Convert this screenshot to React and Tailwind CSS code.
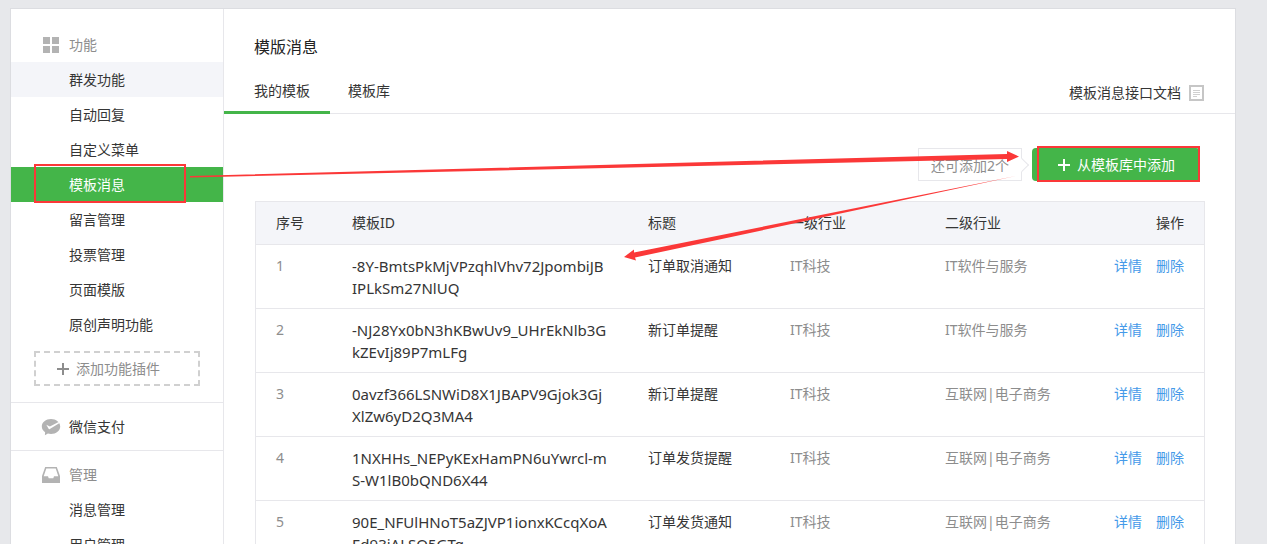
import { Fragment } from 'react';

const featureItems = [
  { label: '群发功能', state: 'hover' },
  { label: '自动回复' },
  { label: '自定义菜单' },
  { label: '模板消息', state: 'active' },
  { label: '留言管理' },
  { label: '投票管理' },
  { label: '页面模版' },
  { label: '原创声明功能' },
];

const manageItems = [{ label: '消息管理' }, { label: '用户管理' }];

const templates = [
  { id: ['-8Y-BmtsPkMjVPzqhlVhv72JpombiJB', 'IPLkSm27NlUQ'], title: '订单取消通知', primary: 'IT科技', secondary: 'IT软件与服务' },
  { id: ['-NJ28Yx0bN3hKBwUv9_UHrEkNlb3G', 'kZEvIj89P7mLFg'], title: '新订单提醒', primary: 'IT科技', secondary: 'IT软件与服务' },
  { id: ['0avzf366LSNWiD8X1JBAPV9Gjok3Gj', 'XlZw6yD2Q3MA4'], title: '新订单提醒', primary: 'IT科技', secondary: '互联网|电子商务' },
  { id: ['1NXHHs_NEPyKExHamPN6uYwrcl-m', 'S-W1lB0bQND6X44'], title: '订单发货提醒', primary: 'IT科技', secondary: '互联网|电子商务' },
  { id: ['90E_NFUlHNoT5aZJVP1ionxKCcqXoA', 'Ed93jALSQ5GTg'], title: '订单发货通知', primary: 'IT科技', secondary: '互联网|电子商务' },
];

function GridIcon() {
  return (
    <svg viewBox="0 0 18 18" className="h-[18px] w-[18px]" fill="#b3b3b3">
      <path d="M1 1h7v7H1zM10 1h7v7h-7zM1 10h7v7H1zM10 10h7v7h-7z" />
    </svg>
  );
}

function PayIcon() {
  return (
    <svg viewBox="0 0 20 18" className="h-[18px] w-5">
      <path d="M10 1C4.900 1 .8 4.300.8 8.500c0 2.300 1.300 4.300 3.300 5.700L3.900 17.200l3-1.600c1 .3 2 .4 3.100.4 5.100 0 9.200-3.300 9.200-7.500S15.100 1 10 1z" fill="#b3b3b3" />
      <path d="M5.300 6.800l2.300 4c.3.500.7.600 1.200.3L18.600 5 17.600 3.900 8.900 8.500z" fill="#fff" />
    </svg>
  );
}

function TrayIcon() {
  return (
    <svg viewBox="0 0 20 18" className="h-[18px] w-5">
      <path d="M4.200 1h11.600L19 10v7H1v-7z" fill="#b3b3b3" />
      <path d="M5.300 2.500h9.400l2.600 7.800H13l-.7 2H7.700L7 10.300H2.700z" fill="#fff" />
    </svg>
  );
}

function DocIcon() {
  return (
    <svg viewBox="0 0 15 16" className="h-4 w-[15px]">
      <path d="M1 1h13v14H1z" fill="#fff" stroke="#c6c6c6" strokeWidth="2" />
      <path d="M4 5.500h7M4 7.500h7M4 9.500h7M4 11.500h4" stroke="#d0d0d0" fill="none" />
    </svg>
  );
}

function PlusIcon() {
  return (
    <svg viewBox="0 0 14 14" className="h-3.5 w-3.5" fill="none" stroke="currentColor" strokeWidth="2">
      <path d="M7 1v12M1 7h12" />
    </svg>
  );
}

function NavItem({ label, state }) {
  const tone = state === 'active' ? 'bg-[#44b549] text-white' : state === 'hover' ? 'bg-[#f4f5f9]' : '';
  return (
    <li className="relative">
      <a href="#" aria-current={state === 'active' ? 'page' : undefined} className={`block h-[35px] pl-[58px] leading-[35px] ${tone}`}>
        {label}
      </a>
      {state === 'active' && <span className="absolute -top-[3px] left-[23px] h-[39px] w-[152px] border-2 border-[#fb3838]" />}
    </li>
  );
}

function Sidebar() {
  return (
    <nav className="w-[213px] shrink-0 border-r border-[#e7e7eb]">
      <div className="border-b border-[#e7e7eb] pt-[18px] pb-4">
        <h2 className="flex h-[35px] items-center gap-[9px] pl-[31px] text-[#8d8d8d]">
          <GridIcon />
          功能
        </h2>
        <ul>
          {featureItems.map((item) => <NavItem key={item.label} {...item} />)}
        </ul>
        <button type="button" className="mt-[9px] ml-[23px] flex h-[35px] w-[166px] items-center gap-1.5 border-2 border-dashed border-[#d0d0d0] pl-5 text-[#8d8d8d]">
          <PlusIcon />
          添加功能插件
        </button>
      </div>
      <a href="#" className="flex h-12 items-center gap-2 border-b border-[#e7e7eb] pl-[30px]">
        <PayIcon />
        微信支付
      </a>
      <div className="pt-1.5">
        <h2 className="flex h-[35px] items-center gap-2 pl-[30px] text-[#8d8d8d]">
          <TrayIcon />
          管理
        </h2>
        <ul>
          {manageItems.map((item) => <NavItem key={item.label} {...item} />)}
        </ul>
      </div>
    </nav>
  );
}

function TemplateTable() {
  return (
    <table className="mt-5 w-full table-fixed border-separate border-spacing-0 border border-[#e7e7eb] text-left">
      <thead className="bg-[#f4f5f9]">
        <tr className="h-[43px] *:border-b *:border-[#e7e7eb] *:px-5 *:font-normal">
          <th className="w-[76px]">序号</th>
          <th className="w-[296px]">模板ID</th>
          <th className="w-[142px]">标题</th>
          <th className="w-[155px]">一级行业</th>
          <th>二级行业</th>
          <th className="w-[130px] text-right">操作</th>
        </tr>
      </thead>
      <tbody>
        {templates.map((row, idx) => (
          <tr key={row.id[0]} className="align-top leading-[22px] *:border-b *:border-[#e7e7eb] *:px-5 *:pt-2.5 *:pb-[9px]">
            <td className="text-[#8d8d8d]">{idx + 1}</td>
            <td className="text-[15px] leading-[22px] whitespace-nowrap">
              {row.id.map((line, i) => (
                <Fragment key={line}>
                  {i > 0 && <br />}
                  {line}
                </Fragment>
              ))}
            </td>
            <td>{row.title}</td>
            <td className="text-[#8d8d8d]">{row.primary}</td>
            <td className="text-[#8d8d8d]">{row.secondary}</td>
            <td className="text-right whitespace-nowrap text-[#459ae9]">
              <a href="#">详情</a>
              <a href="#" className="ml-3.5">删除</a>
            </td>
          </tr>
        ))}
      </tbody>
    </table>
  );
}

function Arrows() {
  return (
    <svg className="pointer-events-none absolute top-0 left-0 h-[300px] w-[1267px]" viewBox="0 0 1267 300" fill="#fb3838">
      <path d="M190 176L1007 154L1007 151L1019 156.500L1007 162L1007 159L190 177.500z" />
      <path d="M1016 176L634 252.500L634 249.500L624 257L636 260.500L635 257.500z" />
    </svg>
  );
}

function App() {
  return (
    <div className="relative h-screen overflow-hidden bg-[#e7e8eb] pt-2 pr-[31px] pl-2.5 font-['Noto_Sans','Noto_Sans_CJK_SC',sans-serif] text-sm text-[#353535]">
      <div className="flex min-h-screen border border-[#dcdde1] bg-white">
        <Sidebar />
        <main className="min-w-0 flex-1">
          <h1 className="pt-[26px] pl-[30px] text-base leading-6 text-[#222]">模版消息</h1>
          <div className="mt-2 flex items-end justify-between border-b border-[#e7e7eb] pr-[31px]">
            <div className="-mb-px flex leading-10">
              <a href="#" aria-current="page" className="border-b-3 border-[#44b549] pt-1 pr-5 pl-[30px]">我的模板</a>
              <a href="#" className="border-b-3 border-transparent px-[18px] pt-1">模板库</a>
            </div>
            <a href="#" className="flex h-[41px] items-center gap-2">
              模板消息接口文档
              <DocIcon />
            </a>
          </div>
          <div className="pt-[34px] pr-[30px] pl-[31px]">
            <div className="flex items-center justify-end gap-2.5 pr-[5px]">
              <span className="relative h-[33px] border border-[#e7e7eb] px-3 leading-[34px] text-[#8d8d8d]">
                还可添加2个
                <span className="absolute top-[11px] -right-[6px] h-2.5 w-2.5 rotate-45 border-t border-r border-[#e7e7eb] bg-white" />
              </span>
              <button type="button" className="relative flex h-[33px] w-[168px] items-center justify-center gap-1.5 rounded-sm bg-[#44b549] text-white">
                <PlusIcon />
                从模板库中添加
                <span className="absolute -top-[2px] right-0 h-9 w-[163px] border-2 border-[#fb3838]" />
              </button>
            </div>
            <TemplateTable />
          </div>
        </main>
      </div>
      <Arrows />
    </div>
  );
}

export default App;
